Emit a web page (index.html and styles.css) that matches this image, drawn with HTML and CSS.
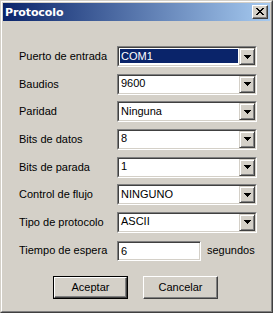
FILE: index.html
```html
<!DOCTYPE html>
<html>
<head>
<meta charset="utf-8">
<link rel="stylesheet" href="styles.css">
</head>
<body>
<div class="window">
  <div class="frame">
    <div class="titlebar">
      <span class="title">Protocolo</span>
      <div class="close">
        <svg width="8" height="7" viewBox="0 0 8 7" shape-rendering="crispEdges">
          <rect x="0" y="0" width="2" height="1"/><rect x="6" y="0" width="2" height="1"/>
          <rect x="1" y="1" width="2" height="1"/><rect x="5" y="1" width="2" height="1"/>
          <rect x="2" y="2" width="4" height="1"/>
          <rect x="3" y="3" width="2" height="1"/>
          <rect x="2" y="4" width="4" height="1"/>
          <rect x="1" y="5" width="2" height="1"/><rect x="5" y="5" width="2" height="1"/>
          <rect x="0" y="6" width="2" height="1"/><rect x="6" y="6" width="2" height="1"/>
        </svg>
      </div>
    </div>
    <div class="content">
      <div class="form">
        <span class="label">Puerto de entrada</span>
        <div class="combo"><div class="value"><span class="sel">COM1</span></div><div class="drop"><svg width="7" height="4" viewBox="0 0 7 4" shape-rendering="crispEdges"><rect x="0" y="0" width="7" height="1"/><rect x="1" y="1" width="5" height="1"/><rect x="2" y="2" width="3" height="1"/><rect x="3" y="3" width="1" height="1"/></svg></div></div>

        <span class="label">Baudios</span>
        <div class="combo"><div class="value"><span>9600</span></div><div class="drop"><svg width="7" height="4" viewBox="0 0 7 4" shape-rendering="crispEdges"><rect x="0" y="0" width="7" height="1"/><rect x="1" y="1" width="5" height="1"/><rect x="2" y="2" width="3" height="1"/><rect x="3" y="3" width="1" height="1"/></svg></div></div>

        <span class="label">Paridad</span>
        <div class="combo"><div class="value"><span>Ninguna</span></div><div class="drop"><svg width="7" height="4" viewBox="0 0 7 4" shape-rendering="crispEdges"><rect x="0" y="0" width="7" height="1"/><rect x="1" y="1" width="5" height="1"/><rect x="2" y="2" width="3" height="1"/><rect x="3" y="3" width="1" height="1"/></svg></div></div>

        <span class="label">Bits de datos</span>
        <div class="combo"><div class="value"><span>8</span></div><div class="drop"><svg width="7" height="4" viewBox="0 0 7 4" shape-rendering="crispEdges"><rect x="0" y="0" width="7" height="1"/><rect x="1" y="1" width="5" height="1"/><rect x="2" y="2" width="3" height="1"/><rect x="3" y="3" width="1" height="1"/></svg></div></div>

        <span class="label">Bits de parada</span>
        <div class="combo"><div class="value"><span>1</span></div><div class="drop"><svg width="7" height="4" viewBox="0 0 7 4" shape-rendering="crispEdges"><rect x="0" y="0" width="7" height="1"/><rect x="1" y="1" width="5" height="1"/><rect x="2" y="2" width="3" height="1"/><rect x="3" y="3" width="1" height="1"/></svg></div></div>

        <span class="label">Control de flujo</span>
        <div class="combo"><div class="value"><span>NINGUNO</span></div><div class="drop"><svg width="7" height="4" viewBox="0 0 7 4" shape-rendering="crispEdges"><rect x="0" y="0" width="7" height="1"/><rect x="1" y="1" width="5" height="1"/><rect x="2" y="2" width="3" height="1"/><rect x="3" y="3" width="1" height="1"/></svg></div></div>

        <span class="label">Tipo de protocolo</span>
        <div class="combo"><div class="value"><span>ASCII</span></div><div class="drop"><svg width="7" height="4" viewBox="0 0 7 4" shape-rendering="crispEdges"><rect x="0" y="0" width="7" height="1"/><rect x="1" y="1" width="5" height="1"/><rect x="2" y="2" width="3" height="1"/><rect x="3" y="3" width="1" height="1"/></svg></div></div>

        <span class="label">Tiempo de espera</span>
        <div class="timeout"><div class="edit">6</div><span class="unit">segundos</span></div>
      </div>
      <div class="buttons">
        <div class="btn default"><div class="btn-inner">Aceptar</div></div>
        <div class="btn"><div class="btn-inner">Cancelar</div></div>
      </div>
    </div>
  </div>
</div>
</body>
</html>
```
FILE: styles.css
```css
* { box-sizing: border-box; }
html, body { margin: 0; padding: 0; background: #d4d0c8; }
body {
  font-family: "Liberation Sans", Arial, sans-serif;
  font-size: 11px;
  color: #000;
}
.window {
  width: 273px;
  height: 313px;
  border: 1px solid;
  border-color: #d4d0c8 #404040 #404040 #d4d0c8;
  background: #d4d0c8;
}
.frame {
  height: 100%;
  border: 1px solid;
  border-color: #ffffff #808080 #808080 #ffffff;
  padding: 1px;
}
.titlebar {
  height: 18px;
  background: linear-gradient(to right, #0a246a, #a6caf0);
  display: flex;
  align-items: center;
  justify-content: space-between;
  padding: 0 2px 0 2px;
}
.title {
  color: #fff;
  font-weight: bold;
  font-size: 12px;
  font-family: "DejaVu Sans", sans-serif;
  font-size: 11px;
  letter-spacing: -0.1px;
}
.close {
  width: 16px;
  height: 14px;
  background: #d4d0c8;
  border: 1px solid;
  border-color: #ffffff #404040 #404040 #ffffff;
  box-shadow: inset -1px -1px 0 #808080;
  display: flex;
  align-items: center;
  justify-content: center;
  padding: 0 1px 1px 0;
}
.close svg { display: block; }
.content {
  padding: 25px 0 0 16px;
}
.form {
  display: grid;
  grid-template-columns: 98px 140px;
  grid-auto-rows: 21px;
  row-gap: 6.67px;
  align-items: center;
}
.label { white-space: nowrap; padding-bottom: 1px; }
.combo {
  height: 21px;
  border: 1px solid;
  border-color: #808080 #ffffff #ffffff #808080;
  display: flex;
}
.combo .value {
  flex: 1;
  display: flex;
  background: #fff;
  border: 1px solid;
  border-color: #404040 #d4d0c8 #d4d0c8 #404040;
  border-right: none;
  padding: 1px 1px 2px 1px;
}
.combo .value span {
  flex: 1;
  display: flex;
  align-items: center;
  padding-left: 1px;
  padding-bottom: 1px;
}
.combo .value span.sel {
  background: #0a246a;
  color: #fff;
}
.combo .drop {
  width: 17px;
  border-top: 1px solid #404040;
  border-bottom: 1px solid #d4d0c8;
  border-right: 1px solid #d4d0c8;
  background: #d4d0c8;
  display: flex;
}
.drop svg { display: block; }
.combo .drop {
  position: relative;
}
.combo .drop::before {
  content: "";
  position: absolute;
  inset: 0;
  border: 1px solid;
  border-color: #d4d0c8 #404040 #404040 #d4d0c8;
  box-shadow: inset 1px 1px 0 #fff, inset -1px -1px 0 #808080;
}
.combo .drop svg {
  margin: auto;
  position: relative;
  top: 0;
}
.timeout {
  display: flex;
  align-items: center;
  gap: 6px;
  height: 21px;
}
.edit {
  width: 84px;
  height: 20px;
  margin-top: 1px;
  background: #fff;
  border: 1px solid;
  border-color: #808080 #ffffff #ffffff #808080;
  box-shadow: inset 1px 1px 0 #404040, inset -1px -1px 0 #d4d0c8;
  padding: 2px 0 0 3px;
  line-height: 14px;
}
.unit { white-space: nowrap; padding-bottom: 1px; }
.buttons {
  display: flex;
  justify-content: center;
  gap: 15px;
  margin-top: 15px;
  padding-right: 18px;
}
.btn {
  width: 75px;
  height: 23px;
  border: 1px solid;
  border-color: #ffffff #404040 #404040 #ffffff;
  box-shadow: inset -1px -1px 0 #808080;
  display: flex;
}
.btn-inner {
  flex: 1;
  display: flex;
  align-items: center;
  justify-content: center;
  padding-bottom: 1px;
}
.btn.default {
  border: 1px solid #000;
  box-shadow: none;
}
.btn.default .btn-inner {
  border: 1px solid;
  border-color: #ffffff #404040 #404040 #ffffff;
  box-shadow: inset -1px -1px 0 #808080;
}
```
